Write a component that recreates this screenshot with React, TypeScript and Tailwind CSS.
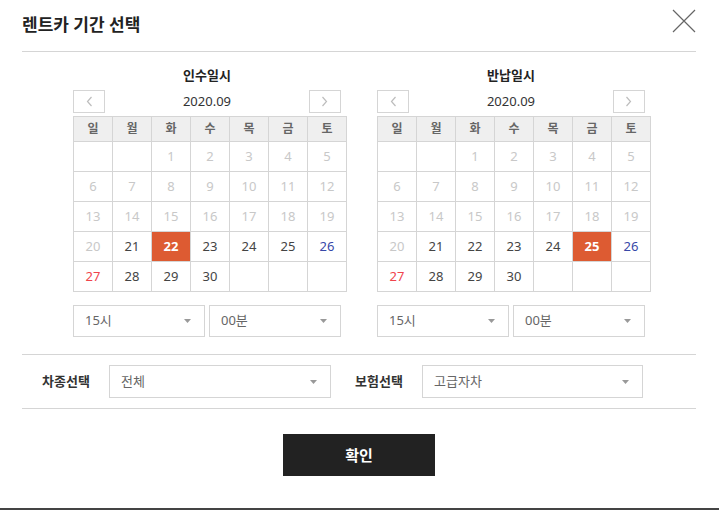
import React from "react";

const FONT = { fontFamily: '"Noto Sans", "Noto Sans CJK KR", sans-serif' };
const WEEK = ["일", "월", "화", "수", "목", "금", "토"];

type Cell = { d: number | null; on: boolean };

function buildMonth(from: number): Cell[] {
  // September 2020 starts on Tuesday
  const cells: Cell[] = [null, null].map(() => ({ d: null, on: false }));
  for (let d = 1; d <= 30; d++) cells.push({ d, on: d >= from });
  while (cells.length < 35) cells.push({ d: null, on: false });
  return cells;
}

function Chevron({ dir }: { dir: "left" | "right" }) {
  return (
    <svg width="7" height="11" viewBox="0 0 7 11" fill="none">
      <path d={dir === "left" ? "M5.5 1 L1.5 5.5 L5.5 10" : "M1.5 1 L5.5 5.5 L1.5 10"} stroke="#bdbdbd" strokeWidth="1.2" />
    </svg>
  );
}

function Caret() {
  return (
    <svg width="7" height="4" viewBox="0 0 7 4">
      <path d="M0 0 H7 L3.5 4 Z" fill="#999" />
    </svg>
  );
}

function SelectBox({ value, className }: { value: string; className: string }) {
  return (
    <div className={`flex items-center justify-between border border-[#d5d5d5] bg-white pl-[11px] pr-[13px] text-[13px] text-[#666] ${className}`}>
      <span>{value}</span>
      <Caret />
    </div>
  );
}

function Calendar({ title, selected }: { title: string; selected: number }) {
  const cells = buildMonth(21);
  return (
    <div className="flex w-[274px] flex-col">
      <p className="mt-[14px] h-[18px] w-[268px] text-center text-[13px] font-bold leading-[18px] text-[#222]">{title}</p>
      <div className="mt-[6px] flex h-[23px] w-[268px] items-center justify-between">
        <button className="flex h-[23px] w-[32px] items-center justify-center border border-[#d5d5d5] bg-white">
          <Chevron dir="left" />
        </button>
        <span className="text-[13px] text-[#333]">2020.09</span>
        <button className="flex h-[23px] w-[32px] items-center justify-center border border-[#d5d5d5] bg-white">
          <Chevron dir="right" />
        </button>
      </div>
      <div className="mt-[3px] grid grid-cols-7 border-l border-t border-[#d5d5d5]">
        {WEEK.map((w) => (
          <div key={w} className="flex h-[25px] items-center justify-center border-b border-r border-[#d5d5d5] bg-[#efefef] text-[12px] font-bold text-[#666]">
            {w}
          </div>
        ))}
        {cells.map((c, i) => {
          const col = i % 7;
          let tone = "text-[#c8c8c8]";
          if (c.d !== null && c.on) tone = col === 0 ? "text-[#f0444c]" : col === 6 ? "text-[#3848a8]" : "text-[#444]";
          const isSel = c.d === selected;
          return (
            <div
              key={i}
              className={`flex h-[30px] items-center justify-center border-b border-r border-[#d5d5d5] text-[13px] ${
                isSel ? "bg-[#dd5b32] font-bold text-white" : `bg-white ${tone}`
              }`}
            >
              {c.d ?? ""}
            </div>
          );
        })}
      </div>
      <div className="mt-[13px] flex w-[268px] gap-[4px]">
        <SelectBox value="15시" className="h-[32px] w-[132px]" />
        <SelectBox value="00분" className="h-[32px] w-[132px]" />
      </div>
    </div>
  );
}

export default function App() {
  return (
    <div style={FONT} className="h-[510px] w-[719px] overflow-hidden border-b-2 border-[#444] bg-white">
      <div className="ml-[22px] flex w-[674px] flex-col">
        <div className="flex h-[52px] items-center justify-between border-b border-[#d5d5d5] pb-[2px]">
          <h1 className="text-[17px] font-bold text-[#222]">렌트카 기간 선택</h1>
          <svg width="24" height="24" viewBox="0 0 24 24" className="-mt-[8px]">
            <path d="M1 1 L23 23 M23 1 L1 23" stroke="#666" strokeWidth="1.2" />
          </svg>
        </div>

        <div className="flex gap-[30px] border-b border-[#d5d5d5] pb-[17px] pl-[51px]">
          <Calendar title="인수일시" selected={22} />
          <Calendar title="반납일시" selected={25} />
        </div>

        <div className="flex h-[54px] items-center border-b border-[#d5d5d5] pl-[20px]">
          <span className="w-[67px] text-[13px] font-bold text-[#333]">차종선택</span>
          <SelectBox value="전체" className="h-[33px] w-[222px]" />
          <span className="ml-[24px] w-[67px] text-[13px] font-bold text-[#333]">보험선택</span>
          <SelectBox value="고급자차" className="h-[33px] w-[221px]" />
        </div>

        <div className="flex justify-center pt-[25px]">
          <button className="h-[42px] w-[152px] bg-[#222] text-[15px] font-bold text-white">확인</button>
        </div>
      </div>
    </div>
  );
}
